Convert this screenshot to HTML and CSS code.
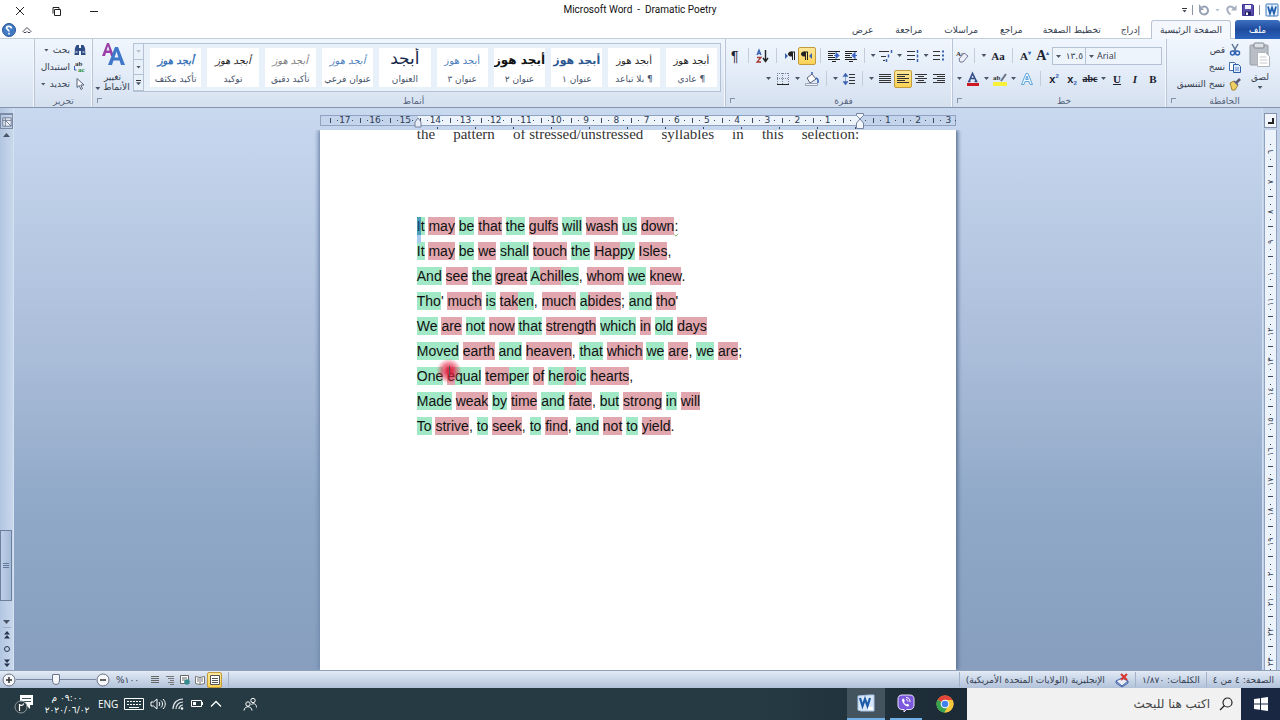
FILE: index.html
```html
<!DOCTYPE html>
<html lang="ar" dir="rtl">
<head>
<meta charset="utf-8">
<title>Dramatic Poetry - Microsoft Word</title>
<link rel="stylesheet" href="styles.css">
</head>
<body>
<header class="titlebar">
  <div class="quick">
    <svg class="i14" viewBox="0 0 14 14"><rect x="1" y="1" width="12" height="12" rx="1" fill="#e8f2fb" stroke="#3d78b8"/><path d="M3 3.500l2 7 2-6 2 6 2-7" fill="none" stroke="#1f5fae" stroke-width="1.800"/></svg>
    <span class="qsep"></span>
    <button aria-label="حفظ"><svg class="i12" viewBox="0 0 12 12"><path d="M.5.5h10l1 1v10H.5z" fill="#5b4cb0" stroke="#3c3390"/><path d="M3 1h6v4H3z" fill="#f2f2fb"/><path d="M3 7.500h6V11H3z" fill="#222459"/><path d="M4 8.500h2V11H4z" fill="#fff"/></svg></button>
    <button aria-label="تكرار"><svg class="i12" viewBox="0 0 12 12"><path d="M5.500 10.500C1.500 8 1.500 4 4 2.800 6 2 8 3 9 5" fill="none" stroke="#a6b0bf" stroke-width="2"/><path d="M6 6.500h5.500V1z" fill="#a6b0bf"/></svg></button>
    <span class="arr pale"></span>
    <button aria-label="تراجع"><svg class="i12" viewBox="0 0 12 12"><path d="M2.500 4.500C1 8 3 10.500 6 10.500s5-3 3.500-6C8.500 2.500 6.500 2 4 3" fill="none" stroke="#97a2b5" stroke-width="2"/><path d="M1 0v6h5z" fill="#97a2b5"/></svg></button>
    <span class="qsep"></span>
    <button class="more" aria-label="تخصيص"><span class="arr"></span></button>
  </div>
  <h1 dir="ltr">Microsoft Word&nbsp; -&nbsp; Dramatic Poetry</h1>
  <div class="winbtns">
    <button aria-label="تصغير"><svg class="i10" viewBox="0 0 10 10"><path d="M1 5.500h8" stroke="#222"/></svg></button>
    <button aria-label="استعادة"><svg class="i10" viewBox="0 0 10 10"><path d="M2.500 3.500h6v6h-6zM1 7.500V1.500h6V3" fill="none" stroke="#222"/></svg></button>
    <button aria-label="إغلاق"><svg class="i10" viewBox="0 0 10 10"><path d="M1 1l8 8M9 1L1 9" stroke="#222"/></svg></button>
  </div>
</header>
<nav class="tabs">
  <button class="file">ملف</button>
  <button class="on">الصفحة الرئيسية</button>
  <button>إدراج</button>
  <button>تخطيط الصفحة</button>
  <button>مراجع</button>
  <button>مراسلات</button>
  <button>مراجعة</button>
  <button>عرض</button>
  <span class="grow"></span>
  <button class="mini" aria-label="تصغير الشريط"><svg class="i10" viewBox="0 0 10 10"><path d="M1 6.500L5 2.500l4 4-1 1H6L5 6.500 4 7.500H2z" fill="#fff" stroke="#445"/></svg></button>
  <button class="mini" aria-label="تعليمات"><svg class="i14" viewBox="0 0 14 14"><circle cx="7" cy="7" r="6.500" fill="#4079c4" stroke="#2a5797"/><path d="M4.500 5.500C5 2.500 9.500 3 9.500 5c0 1.500-2.500 1.500-2.500 3.500M7 9.800v1.600" fill="none" stroke="#fff" stroke-width="1.600" transform="matrix(-1 0 0 1 14 0)"/></svg></button>
</nav>

<section class="ribbon">
  <div class="group clip">
    <div class="body">
      <button class="big">
        <svg class="paste" viewBox="0 0 22 26"><rect x="1" y="3" width="18" height="20" rx="1" fill="#b9bec6" stroke="#969ca6"/><rect x="5" y="1" width="10" height="5" rx="1" fill="#dde0e5" stroke="#7f858f"/><path d="M8.500 10.500h8l4 4v10h-12z" fill="#fff" stroke="#b0b5bd"/><path d="M10.500 15h7M10.500 18h8M10.500 21h8" stroke="#c5c9d0"/></svg>
        <span>لصق</span><span class="arr"></span>
      </button>
      <div class="list">
        <button><svg class="i12" viewBox="0 0 12 12"><path d="M3 0l4 7M9 0L5 7" stroke="#5c7396" stroke-width="1.500"/><circle cx="3.500" cy="9" r="2" fill="none" stroke="#2f62b4" stroke-width="1.500"/><circle cx="8.500" cy="9" r="2" fill="none" stroke="#2f62b4" stroke-width="1.500"/></svg>قص</button>
        <button><svg class="i12" viewBox="0 0 12 12"><path d="M.5 1.500h5l2 2v6h-7z" fill="#fff" stroke="#3d6fb4"/><path d="M4.500 3.500h5l2 2v6h-7z" fill="#dbe9fa" stroke="#2c5ea6"/><path d="M6 7h4M6 9h4" stroke="#5d8bc9"/></svg>نسخ</button>
        <button><svg class="i12" viewBox="0 0 12 12"><path d="M7 5l4-4" stroke="#5b5b78" stroke-width="2.500"/><path d="M1 5l4-2 4 4-3 5H3z" fill="#f0cf62" stroke="#a38432"/><path d="M5 3l4 4" stroke="#53618a" stroke-width="1.500"/></svg>نسخ التنسيق</button>
      </div>
    </div>
    <footer><span>الحافظة</span><i class="launch"></i></footer>
  </div>

  <div class="group font">
    <div class="body rows">
      <div class="row">
        <select class="face" aria-label="الخط"><option>Arial</option></select>
        <select class="size" aria-label="حجم الخط"><option>١٣.٥</option></select>
        <button class="t serif lg" dir="ltr">A<sup>▴</sup></button>
        <button class="t serif" dir="ltr">A<sup>▾</sup></button>
        <span class="sep"></span>
        <button class="t serif w20" dir="ltr">Aa</button><span class="arr"></span>
        <span class="sep"></span>
        <button class="t" aria-label="مسح التنسيق"><svg class="i14" viewBox="0 0 14 14"><text x="1" y="7" class="svgt">Aa</text><path d="M4 10l5-6 4 3-5 6H5z" fill="#eef0f7" stroke="#72789a"/></svg></button>
      </div>
      <div class="row">
        <button class="t serif">B</button>
        <button class="t serif it">I</button>
        <button class="t serif un">U</button><span class="arr"></span>
        <button class="t serif st">abc</button>
        <button class="t" dir="ltr">x<sub>2</sub></button>
        <button class="t" dir="ltr">x<sup>2</sup></button>
        <span class="sep"></span>
        <button class="t" aria-label="تأثيرات"><svg class="i14" viewBox="0 0 14 14"><path d="M1.500 12.500L6 1.500h2l4.500 11h-2.500l-1-3H5l-1 3zM5.700 7.500h2.600L7 4z" fill="#eef8ff" stroke="#5fa5dc"/></svg></button><span class="arr"></span>
        <button class="t" aria-label="تمييز"><svg class="i14" viewBox="0 0 14 14"><path d="M0 10h14v4H0z" fill="#f7f13a"/><text x="0" y="8" class="svgt">ab</text><path d="M8 9l5-7" stroke="#6c7282" stroke-width="2"/></svg></button><span class="arr"></span>
        <button class="t" aria-label="لون الخط"><svg class="i14" viewBox="0 0 14 14"><path d="M1 11h12v3H1z" fill="#d01820"/><path d="M3 9.500L6.500 1.500 10.500 9.500M4.500 6.500h4M2 9.500h2.500M8.500 9.500h3" fill="none" stroke="#344f86" stroke-width="1.600"/></svg></button><span class="arr"></span>
      </div>
    </div>
    <footer><span>خط</span><i class="launch"></i></footer>
  </div>

  <div class="group para">
    <div class="body rows">
      <div class="row">
        <button class="t" aria-label="تعداد نقطي"><svg class="i12" viewBox="0 0 12 12"><path d="M0 1.500h7M0 5.500h7M0 9.500h7" stroke="#333"/><path d="M9 1.500h2M9 5.500h2M9 9.500h2" stroke="#3a62b0" stroke-width="2"/></svg></button><span class="arr"></span>
        <button class="t" aria-label="تعداد رقمي"><svg class="i12" viewBox="0 0 12 12"><path d="M0 1.500h8M0 5.500h8M0 9.500h8" stroke="#333"/><path d="M10.500 0v3M10.500 4.500v3M10.500 9v3" stroke="#3a62b0" stroke-width="1.500"/></svg></button><span class="arr"></span>
        <button class="t" aria-label="قائمة متعددة"><svg class="i14" viewBox="0 0 14 14"><path d="M0 2.500h10M2 7.500h5M4 11.500h2" stroke="#333"/><path d="M12.500 1v3M9.500 5.500v3M7.500 10v3" stroke="#3a62b0" stroke-width="1.500"/></svg></button><span class="arr"></span>
        <span class="sep"></span>
        <button class="t" aria-label="إنقاص المسافة"><svg class="i12" viewBox="0 0 12 12"><path d="M0 1.500h12M0 3.500h7M0 5.500h5M0 7.500h7M0 9.500h12M4 11.500h4" stroke="#222"/><path d="M7 5.500l3-3v6zM10 5.500h2" fill="#3a62c0" stroke="#3a62c0"/></svg></button>
        <button class="t" aria-label="زيادة المسافة"><svg class="i12" viewBox="0 0 12 12"><path d="M0 1.500h12M0 3.500h7M0 5.500h5M0 7.500h7M0 9.500h12M4 11.500h4" stroke="#222"/><path d="M11 5.500l-3-3v6zM6 5.500h2" fill="#3a62c0" stroke="#3a62c0"/></svg></button>
        <span class="sep"></span>
        <button class="t sel" aria-label="من اليمين إلى اليسار"><svg class="i12" viewBox="0 0 12 12"><path d="M4 2H2.500a1.500 1.500 0 0 0 0 4H4zM4.500 2v8M6.500 2v8M3 2h4" fill="#222" stroke="#222"/><path d="M11 3v6L8 6z" fill="#3a62b0"/></svg></button>
        <button class="t" aria-label="من اليسار إلى اليمين"><svg class="i12" viewBox="0 0 12 12"><path d="M8 2H6.500a1.500 1.500 0 0 0 0 4H8zM8.500 2v8M10.500 2v8M7 2h4" fill="#222" stroke="#222"/><path d="M1 3v6l3-3z" fill="#3a62b0"/></svg></button>
        <span class="sep"></span>
        <button class="t w20" aria-label="فرز"><svg class="i14" viewBox="0 0 14 14"><path d="M2 6l2-5 2 5M2.500 4.500h3" fill="none" stroke="#3a62b0" stroke-width="1.300"/><path d="M2 8.500h4l-4 4.500h4" fill="none" stroke="#a33b33" stroke-width="1.300"/><path d="M10.500 1v10M8 9l2.500 3.500L13 9" fill="none" stroke="#222" stroke-width="1.400"/></svg></button>
        <span class="sep"></span>
        <button class="t pil">¶</button>
      </div>
      <div class="row">
        <button class="t" aria-label="محاذاة لليمين"><svg class="i12" viewBox="0 0 12 12"><path d="M0 1.500h12M4 3.500h8M0 5.500h12M4 7.500h8M0 9.500h12" stroke="#333"/></svg></button>
        <button class="t" aria-label="توسيط"><svg class="i12" viewBox="0 0 12 12"><path d="M0 1.500h12M3 3.500h6M0 5.500h12M3 7.500h6M1 9.500h10" stroke="#333"/></svg></button>
        <button class="t sel" aria-label="محاذاة لليسار"><svg class="i12" viewBox="0 0 12 12"><path d="M0 1.500h12M0 3.500h8M0 5.500h12M0 7.500h8M0 9.500h12" stroke="#333"/></svg></button>
        <button class="t" aria-label="ضبط"><svg class="i12" viewBox="0 0 12 12"><path d="M0 1.500h12M0 3.500h12M0 5.500h12M0 7.500h12M0 9.500h12" stroke="#333"/></svg></button><span class="arr"></span>
        <span class="sep"></span>
        <button class="t" aria-label="تباعد الأسطر"><svg class="i12" viewBox="0 0 12 12"><path d="M6 1.500h6M6 4.500h6M6 7.500h6M6 10.500h6" stroke="#333"/><path d="M2.500 0L5 3.500H0zM2.500 12L5 8.500H0zM2.500 3v6" fill="#3a62b0" stroke="#3a62b0" stroke-width=".500"/></svg></button><span class="arr"></span>
        <span class="sep"></span>
        <button class="t w20" aria-label="تظليل"><svg class="i14" viewBox="0 0 14 14"><path d="M2 6l5-4 4 5-6 4z" fill="#fff" stroke="#56617c"/><path d="M7 2V0M11 6c3 1 2 3 2 5" fill="none" stroke="#3a62b0" stroke-width="1.500"/><path d="M.5 11.500h12v2H.5z" fill="#eef2f8" stroke="#9aa6ba"/></svg></button><span class="arr"></span>
        <button class="t w20" aria-label="حدود"><svg class="i12" viewBox="0 0 12 12"><path d="M.5 0v11M5.500 0v11M11.500 0v11M0 .500h12M0 5.500h12" stroke="#7a8498" stroke-dasharray="1 1"/><path d="M0 11.500h12" stroke="#222"/></svg></button><span class="arr"></span>
      </div>
    </div>
    <footer><span>فقرة</span><i class="launch"></i></footer>
  </div>

  <div class="group styles">
    <div class="body">
      <div class="gallery">
        <button class="card"><b class="n">أبجد هوز</b><span>¶ عادي</span></button>
        <button class="card"><b class="n">أبجد هوز</b><span>¶ بلا تباعد</span></button>
        <button class="card"><b class="h1">أبجد هوز</b><span>عنوان ١</span></button>
        <button class="card"><b class="h2">أبجد هوز</b><span>عنوان ٢</span></button>
        <button class="card"><b class="h3">أبجد هوز</b><span>عنوان ٣</span></button>
        <button class="card"><b class="ti">أبجد</b><span>العنوان</span></button>
        <button class="card"><b class="su">أبجد هوز</b><span>عنوان فرعي</span></button>
        <button class="card"><b class="se">أبجد هوز</b><span>تأكيد دقيق</span></button>
        <button class="card"><b class="em">أبجد هوز</b><span>توكيد</span></button>
        <button class="card"><b class="ie">أبجد هوز</b><span>تأكيد مكثف</span></button>
        <div class="spin">
          <button aria-label="أعلى"><span class="arr pale"></span></button>
          <button aria-label="أسفل"><span class="arr"></span></button>
          <button class="more" aria-label="المزيد"><span class="arr"></span></button>
        </div>
      </div>
      <button class="big change">
        <svg class="aa" viewBox="0 0 24 24"><path d="M1 14L6 1h2l5 13h-3L9 11H5l-1 3zM5.500 8.500h3L7 4z" fill="#9b3fa8"/><path d="M7 23L14 5h3l7 18h-4l-1.500-4.500h-6L11 23zM13.500 15.500h4l-2-6z" fill="#3f78c8"/></svg>
        <span>تغيير<br>الأنماط <i class="arr"></i></span>
      </button>
    </div>
    <footer><span>أنماط</span><i class="launch"></i></footer>
  </div>

  <div class="group edit">
    <div class="body">
      <div class="list">
        <button><svg class="i12" viewBox="0 0 12 12"><path d="M1 4l1.500-3H5v10H.5zM7 1h2.500L11 4l.5 7H7zM5 4h2v3H5z" fill="#2f4d85"/><path d="M1.500 8h2M8.500 8h2" stroke="#fff"/></svg>بحث<i class="arr"></i></button>
        <button><svg class="i12" viewBox="0 0 12 12"><text x="1" y="5" class="svgt">ab</text><text x="4" y="11" class="svgt grn">ac</text><path d="M.5 5v4h2" fill="none" stroke="#345fae"/></svg>استبدال</button>
        <button><svg class="i12" viewBox="0 0 12 12"><path d="M3 .500v9l2.300-2 1.700 4 1.500-.8-1.700-3.700H10z" fill="#fff" stroke="#56617c"/></svg>تحديد<i class="arr"></i></button>
      </div>
    </div>
    <footer><span>تحرير</span></footer>
  </div>
</section>

<main class="work" dir="ltr">
  <aside class="scroll">
    <button class="toggle" aria-label="المسطرة"><svg class="i10" viewBox="0 0 12 12"><path d="M1 1h10v10H1zM1 4h10M4 1v10M4 4l7 7" fill="#eef3fa" stroke="#5d6b85"/></svg></button>
    <span class="arr up"></span>
    <div class="track"><div class="thumb"></div></div>
    <span class="arr"></span>
    <div class="browse">
      <svg class="i8" viewBox="0 0 8 8"><path d="M4 0l3 3.500H1zM4 4l3 3.500H1z" fill="#26344f"/></svg>
      <svg class="i8" viewBox="0 0 8 8"><circle cx="4" cy="4" r="2.500" fill="none" stroke="#26344f"/></svg>
      <svg class="i8" viewBox="0 0 8 8"><path d="M4 4L1 .500h6zM4 8L1 4.500h6z" fill="#26344f"/></svg>
    </div>
  </aside>
  <div class="canvas">
    <div class="hruler">
      <svg class="mark start" viewBox="0 0 8 16"><path d="M4 5l3 4v5H1V9z" fill="#e6edf7" stroke="#75859f"/></svg>
      <svg class="mark end" viewBox="0 0 8 16"><path d="M.5.500h7v2L4 6 .500 2.500zM4 6l3.500 4v5.500h-7V10z" fill="#f2f5fa" stroke="#75859f"/></svg>
      <span>17</span><span>16</span><span>15</span><span>14</span><span>13</span><span>12</span><span>11</span><span>10</span><span>9</span><span>8</span><span>7</span><span>6</span><span>5</span><span>4</span><span>3</span><span>2</span><span>1</span><span></span><span>1</span><span>2</span><span>3</span>
    </div>
    <article class="page">
      <p class="intro"><span>the</span><span>pattern</span><span>of stressed/unstressed</span><span>syllables</span><span>in</span><span>this</span><span>selection:</span></p>
      <div class="poem">
        <p><mark class="g"><span class="caret">I</span>t</mark> <mark>may</mark> <mark class="g">be</mark> <mark>that</mark> <mark class="g">the</mark> <mark>gulfs</mark> <mark class="g">will</mark> <mark>wash</mark> <mark class="g">us</mark> <mark>down</mark><mark class="wavy">:</mark></p>
        <p><mark class="g">It</mark> <mark>may</mark> <mark class="g">be</mark> <mark>we</mark> <mark class="g">shall</mark> <mark>touch</mark> <mark class="g">the</mark> <mark>Hap</mark><mark class="g">py</mark> <mark>Isles</mark>,</p>
        <p><mark class="g">And</mark> <mark>see</mark> <mark class="g">the</mark> <mark>great</mark> <mark class="g">A</mark><mark>chil</mark><mark class="g">les</mark>, <mark>whom</mark> <mark class="g">we</mark> <mark>knew</mark>.</p>
        <p><mark class="g">Tho</mark>' <mark>much</mark> <mark class="g">is</mark> <mark>tak</mark><mark class="g">en</mark>, <mark>much</mark> <mark class="g">a</mark><mark>bides</mark>; <mark class="g">and</mark> <mark>tho</mark>'</p>
        <p><mark class="g">We</mark> <mark>are</mark> <mark class="g">not</mark> <mark>now</mark> <mark class="g">that</mark> <mark>strength</mark> <mark class="g">which</mark> <mark>in</mark> <mark class="g">old</mark> <mark>days</mark></p>
        <p><mark class="g">Moved</mark> <mark>earth</mark> <mark class="g">and</mark> <mark>heaven</mark>, <mark class="g">that</mark> <mark>which</mark> <mark class="g">we</mark> <mark>are</mark>, <mark class="g">we</mark> <mark>are</mark>;</p>
        <p><mark class="g">One</mark> <mark class="spot">e</mark><mark class="g">qual</mark> <mark>tem</mark><mark class="g">per</mark> <mark>of</mark> <mark class="g">he</mark><mark>ro</mark><mark class="g">ic</mark> <mark>hearts</mark>,</p>
        <p><mark class="g">Made</mark> <mark>weak</mark> <mark class="g">by</mark> <mark>time</mark> <mark class="g">and</mark> <mark>fate</mark>, <mark class="g">but</mark> <mark>strong</mark> <mark class="g">in</mark> <mark>will</mark></p>
        <p><mark class="g">To</mark> <mark>strive</mark>, <mark class="g">to</mark> <mark>seek</mark>, <mark class="g">to</mark> <mark>find</mark>, <mark class="g">and</mark> <mark>not</mark> <mark class="g">to</mark> <mark>yield</mark>.</p>
      </div>
    </article>
  </div>
  <aside class="vside">
    <div class="tabstop"><svg class="i8" viewBox="0 0 8 8"><path d="M6 1v5H1" fill="none" stroke="#222" stroke-width="2"/></svg></div>
    <div class="vruler"><span>٦</span><span>٧</span><span>٨</span><span>٩</span><span>١٠</span><span>١١</span><span>١٢</span><span>١٣</span><span>١٤</span><span>١٥</span><span>١٦</span><span>١٧</span><span>١٨</span><span>١٩</span><span>٢٠</span><span>٢١</span><span>٢٢</span><span>٢٣</span></div>
  </aside>
</main>

<footer class="status">
  <span>الصفحة: ٤ من ٤</span><span class="sep"></span>
  <span>الكلمات: <bdo dir="ltr">١/٨٧٠</bdo></span><span class="sep"></span>
  <svg class="i14" viewBox="0 0 14 14"><path d="M1 8l6-3 6 3-6 5z" fill="#e9eefa" stroke="#3d5fa6"/><path d="M1 8v2l6 4 6-4V8" fill="none" stroke="#3d5fa6"/><path d="M6 1l6 6M12 1L6 7" stroke="#d8352c" stroke-width="2"/></svg>
  <span class="lang">الإنجليزية (الولايات المتحدة الأمريكية)</span><span class="sep"></span>
  <span class="grow"></span>
  <span class="sep"></span>
  <div class="views">
    <button class="sel" aria-label="تخطيط الطباعة"><svg class="i10" viewBox="0 0 10 10"><path d="M.5.500h9v9h-9zM2 3.500h6M2 5.500h6M2 7.500h6" fill="#fff" stroke="#555"/></svg></button>
    <button aria-label="قراءة"><svg class="i10" viewBox="0 0 10 10"><path d="M.5 1.500L5 2.500l4.500-1v7L5 9.500.500 8.500zM5 2v7M2 4h2M6 4h2M2 6h2M6 6h2" fill="#fff" stroke="#777"/></svg></button>
    <button aria-label="ويب"><svg class="i10" viewBox="0 0 10 10"><path d="M.5.500h8v8h-8zM2 3h5M2 5h3" fill="#fff" stroke="#666"/><circle cx="7" cy="7" r="2.800" fill="#358a8c"/></svg></button>
    <button aria-label="مخطط تفصيلي"><svg class="i10" viewBox="0 0 10 10"><path d="M1 1.500h8M3 3.500h6M5 5.500h4M3 7.500h6M5 9.500h4" stroke="#777"/></svg></button>
    <button aria-label="مسودة"><svg class="i10" viewBox="0 0 10 10"><path d="M1 1.500h8M1 3.500h8M1 5.500h8M1 7.500h8" stroke="#666"/></svg></button>
  </div>
  <span class="zoomv" dir="ltr"><bdo dir="ltr">%١٠٠</bdo></span>
  <button class="rnd" aria-label="تصغير العرض"><svg class="i14" viewBox="0 0 14 14"><circle cx="7" cy="7" r="6" fill="#f5f7fb" stroke="#6b7280"/><path d="M4 7h6" stroke="#333" stroke-width="1.500"/></svg></button>
  <input class="zoom" type="range" min="0" max="100" value="50" aria-label="التكبير">
  <button class="rnd" aria-label="تكبير العرض"><svg class="i14" viewBox="0 0 14 14"><circle cx="7" cy="7" r="6" fill="#f5f7fb" stroke="#6b7280"/><path d="M4 7h6M7 4v6" stroke="#333" stroke-width="1.500"/></svg></button>
</footer>

<footer class="taskbar">
  <button class="startb" aria-label="ابدأ"><svg class="i14" viewBox="0 0 14 14"><path d="M0 2l6-.8v5.300H0zM7 1l7-1v6.500H7zM0 7.500h6v5.300L0 12zM7 7.500h7V14l-7-1z" fill="#fff"/></svg></button>
  <label class="search"><svg class="i14" viewBox="0 0 14 14"><circle cx="8.500" cy="5.500" r="4.500" fill="none" stroke="#222" stroke-width="1.200"/><path d="M5.500 8.500L1 13" stroke="#222" stroke-width="1.200"/></svg><input type="text" placeholder="اكتب هنا للبحث" aria-label="بحث"></label>
  <button class="app" aria-label="Chrome"><svg class="i18" viewBox="0 0 18 18"><circle cx="9" cy="9" r="8.500" fill="#f7c83b"/><path d="M9 9L1.600 4.700A8.500 8.500 0 0 1 16.400 4.700z" fill="#e2453a"/><path d="M9 9L1.600 4.700A8.500 8.500 0 0 0 8.500 17.500L12 11z" fill="#35a352"/><path d="M9 5h7.500a8.500 8.500 0 0 1-8 12.500L12.500 11z" fill="#f7c83b"/><circle cx="9" cy="9" r="4.300" fill="#fff"/><circle cx="9" cy="9" r="3.300" fill="#4280ec"/></svg></button>
  <button class="app run" aria-label="Viber"><svg class="i18" viewBox="0 0 18 18"><path d="M5 1h8c3 0 4 2 4 4v6c0 3-2 4.500-4 4.500H9.500L7 18v-2.500H5c-3 0-4-2-4-4.500V5c0-2 1-4 4-4z" fill="#7c59dc" stroke="#e8e2fb"/><path d="M6 4.500c-2 1-.5 4 1 5.800 1.500 1.700 4 3.200 5 1.500.5-1-.7-1.500-1.700-2l-1 .7C8 10 7.500 9 7 8l.8-1C7.500 6 7 4.500 6 4.500z" fill="#fff"/><path d="M9 3.500c3 0 4 2 4 4.500M9 5.500c1.500 0 2 1 2 2" fill="none" stroke="#fff"/></svg></button>
  <button class="app run active" aria-label="Word"><svg class="i18" viewBox="0 0 18 18"><path d="M1 2l11-1h5v16H4l-3-1z" fill="#d9e8f8" stroke="#a9c6e6"/><path d="M3 4l2.500 8L8 5l2.500 7L13 4" fill="none" stroke="#1d5aa8" stroke-width="2.200"/><path d="M11 13h5v3h-5z" fill="#fff"/></svg></button>
  <span class="grow"></span>
  <div class="tray">
    <svg class="i14 people" viewBox="0 0 14 14"><circle cx="5" cy="7" r="2.200" fill="none" stroke="#fff"/><circle cx="10" cy="3.500" r="2.200" fill="none" stroke="#fff"/><path d="M1 13.500c.5-5 7.500-5 8 0M8.500 7.500c3-2 5 0 5 3" fill="none" stroke="#fff"/></svg>
    <svg class="i12" viewBox="0 0 12 12"><path d="M1 8.500l5-5 5 5" fill="none" stroke="#fff" stroke-width="1.300"/></svg>
    <svg class="i14" viewBox="0 0 14 14"><path d="M1.500 3.500h10v6h-10zM12.500 5v3" fill="none" stroke="#fff"/><path d="M3 5h3v3H3z" fill="#fff"/></svg>
    <svg class="i12" viewBox="0 0 12 12"><path d="M1 11C1 5 5 1 11 1M4 11c0-4 3-7 7-7M7 11c0-2 2-4 4-4" fill="none" stroke="#dfe5e8" stroke-width="1.200"/><circle cx="10" cy="10.500" r="1.300" fill="#fff"/></svg>
    <svg class="i16" viewBox="0 0 16 14"><path d="M1 5h2.500L7 2v10L3.500 9H1zM9 5c1 1 1 3 0 4M11 3.500c2 2 2 5 0 7M13 2c3 3 3 7 0 10" fill="none" stroke="#fff"/></svg>
    <svg class="i20" viewBox="0 0 20 14"><path d="M.5 1.500h19v11H.5z" fill="none" stroke="#fff"/><path d="M3 4.500h14M3 7.500h14" stroke="#fff" stroke-dasharray="2 1"/><path d="M5 10.500h10" stroke="#fff"/></svg>
    <span class="eng">ENG</span>
    <div class="clock"><span>٠٩:٠٠ م</span><span><bdo dir="ltr">٢٠٢٠/٠٦/٠٢</bdo></span></div>
    <svg class="note" viewBox="0 0 20 20"><path d="M6 1h13v10h-3v4l-4-4H6z" fill="#fff"/><path d="M8 4.500h9M8 7.500h9" stroke="#44545c"/><circle cx="7" cy="13" r="6" fill="#29383f" stroke="#8d989d"/><path d="M5.500 17V10M5.500 10c0 2 4 2 4-.5" fill="none" stroke="#fff" stroke-width="1.200"/></svg>
  </div>
</footer>
</body>
</html>
```

FILE: styles.css
```css
* { box-sizing: border-box; }
html, body { height: 100%; }
body {
  margin: 0;
  display: flex;
  flex-direction: column;
  overflow: hidden;
  background: #fff;
  color: #333c4e;
  font: 9px/12px "DejaVu Sans", "Liberation Sans", sans-serif;
}
button, select, input { font: inherit; color: inherit; }
button { border: 0; padding: 0; margin: 0; background: none; display: inline-flex; align-items: center; justify-content: center; white-space: nowrap; }
svg { display: block; flex: none; overflow: visible; }
p, h1 { margin: 0; }
.grow { flex: 1; }
.i8 { width: 8px; height: 8px; }
.i10 { width: 10px; height: 10px; }
.i12 { width: 12px; height: 12px; }
.i14 { width: 14px; height: 14px; }
.i16 { width: 16px; height: 14px; }
.i18 { width: 18px; height: 18px; }
.i20 { width: 20px; height: 14px; }
.svgt { font: bold 7px "Liberation Serif", serif; fill: #333; direction: ltr; }
.grn { fill: #2b8b3c; }
.arr { display: inline-block; flex: none; width: 5px; height: 3px; background: #4a5568; clip-path: polygon(0 0, 100% 0, 50% 100%); }
.arr.pale { background: #b4bfce; }
.arr.up { clip-path: polygon(50% 0, 100% 100%, 0 100%); }

/* title bar */
.titlebar { display: grid; grid-template-columns: 1fr auto 1fr; align-items: center; height: 20px; flex: none; }
.titlebar h1 { font: 10px/20px Roboto, sans-serif; color: #111; }
.quick { display: flex; align-items: center; gap: 5px; height: 18px; }
.quick > svg:first-child { margin-right: 1px; }
.qsep { width: 1px; height: 10px; background: #8a93a3; }
.more { flex-direction: column; gap: 1px; }
.more::before { content: ""; width: 5px; height: 1px; background: #333; }
.winbtns { display: flex; justify-content: flex-end; gap: 27px; padding-left: 15px; padding-top: 2px; }

/* tabs */
.tabs { display: flex; height: 19px; flex: none; border-bottom: 1px solid #c3ccd9; }
.tabs button { padding: 0 11px; height: 19px; }
.tabs .file { width: 45px; margin-left: 4px; color: #fff; background: linear-gradient(#3d6fc0, #1f4b9d 50%, #2a63bd); border-radius: 3px 3px 0 0; }
.tabs .on { border: 1px solid #b9c4d4; border-bottom: 0; background: #f4f8fd; border-radius: 3px 3px 0 0; padding: 0 8px; }
.tabs .on + button + button { padding: 0 9px; }
.tabs .mini { padding: 0; margin-left: 2px; width: 16px; }
.tabs .mini:last-child { margin-left: 1px; }

/* ribbon */
.ribbon { display: flex; height: 69px; flex: none; background: linear-gradient(#f0f6fd, #e3ecf8 50%, #d5e0ef); border-bottom: 1px solid #8595ad; }
.group { display: flex; flex-direction: column; border-left: 1px solid #b9c5d6; box-shadow: -1px 0 #f5f9fe; padding-top: 3px; }
.group .body { flex: 1; display: flex; min-height: 0; }
.group footer { display: flex; align-items: center; height: 13px; color: #55637b; }
.group footer span { flex: 1; text-align: center; }
.launch { width: 5px; height: 5px; margin-left: 4px; border: 1px solid #8390a5; border-right-width: 0; border-bottom-width: 0; }
.clip { width: 114px; padding-right: 7px; }
.font { width: 214px; }
.para { width: 227px; }
.styles { flex: 1; }
.edit { width: 58px; margin-left: 34px; }
.big { flex-direction: column; justify-content: flex-start; gap: 3px; width: 26px; }
.paste { width: 22px; height: 26px; }
.list { display: flex; flex-direction: column; gap: 5px; padding: 2px 6px 0 0; align-items: flex-start; }
.list button { gap: 4px; height: 12px; }
.rows { flex-direction: column; gap: 4px; padding: 4px 4px 0 0; }
.row { display: flex; align-items: center; height: 19px; }
.row select { appearance: none; height: 18px; border: 1px solid #b5c2d4; border-radius: 0; margin: 0; padding: 0 2px 0 11px; background: #eef4fb url("data:image/svg+xml,%3Csvg xmlns='http://www.w3.org/2000/svg' width='5' height='3'%3E%3Cpath d='M0 0h5L2.500 3z' fill='%234a5568'/%3E%3C/svg%3E") 3px 7px no-repeat; }
.row .face { width: 79px; direction: ltr; font-family: "Open Sans", sans-serif; }
.row .size { width: 34px; border-right: 0; }
.t { width: 18px; height: 18px; font: bold 11px/18px "Liberation Sans", sans-serif; color: #1d2230; }
.t sup, .t sub { font-size: 6px; line-height: 6px; color: #3a62b0; }
.t sup { align-self: flex-start; padding-top: 3px; }
.t sub { align-self: flex-end; padding-bottom: 2px; }
.serif { font-family: "Liberation Serif", serif; }
.lg { font-size: 14px; }
.w20 { width: 20px; }
.it { font-style: italic; }
.un { text-decoration: underline; }
.st { font-size: 10px; text-decoration: line-through; }
.pil { font-size: 14px; font-weight: normal; }
.sel { background: linear-gradient(#fde79a, #fbd254); border: 1px solid #c29b3c; border-radius: 2px; }
.row .sep { width: 1px; height: 15px; background: #c2ccda; margin: 0 4px; }
.row .arr { margin: 0 2px; }

/* styles gallery */
.gallery { flex: 1; display: flex; gap: 6px; height: 49px; padding: 0 3px 0 0; margin: 1px 4px 0 5px; border: 1px solid #b5c2d4; background: #e8f0fa; }
.card { flex: 1 1 0; min-width: 0; height: 39px; margin-top: 4px; background: #fff; flex-direction: column; overflow: hidden; }
.card b { height: 23px; font: 10px/23px "DejaVu Sans", sans-serif; color: #222; }
.card span { color: #47536a; line-height: 14px; }
.card .h1 { font-size: 11px; font-weight: bold; color: #2b568f; }
.card .h2 { font-size: 12px; font-weight: bold; color: #111; }
.card .h3, .card .su { color: #4f81bd; }
.card .ti { font-size: 17px; color: #17284a; line-height: 18px; }
.card .su, .card .se, .card .em, .card .ie { font-style: italic; }
.card .se { color: #808080; }
.card .ie { color: #3c74b8; font-weight: bold; }
.spin { display: flex; flex-direction: column; width: 10px; }
.spin button { flex: 1; border-right: 1px solid #b5c2d4; border-bottom: 1px solid #b5c2d4; }
.change { width: 31px; margin-left: 4px; line-height: 10px; gap: 6px; }
.aa { width: 24px; height: 24px; }

/* work area */
.work { flex: 1; display: flex; min-height: 0; background: linear-gradient(#c8d8ef, #a9bcd8 45%, #90a9c8 70%, #879ebe); }
.scroll { width: 14px; display: flex; flex-direction: column; align-items: center; background: linear-gradient(90deg, #b3c6e1, #c8d8ec); border-right: 1px solid #d6e2f1; padding-top: 5px; }
.scroll .arr { width: 7px; height: 4px; margin: 3px 0; }
.toggle { width: 13px; height: 16px; border: 1px solid #7b8ba5; border-top-width: 2px; margin-bottom: 1px; }
.track { flex: 1; align-self: stretch; display: grid; grid-template-rows: 389fr 71fr 16fr; }
.thumb { grid-row: 2; border: 1px solid #6d7f9d; background: linear-gradient(#64789a, #64789a) 50% 50% / 6px 1px no-repeat, linear-gradient(#64789a, #64789a) 50% calc(50% - 2px) / 6px 1px no-repeat, linear-gradient(#64789a, #64789a) 50% calc(50% + 2px) / 6px 1px no-repeat, linear-gradient(90deg, #bed0e8, #a5bad8); margin-right: 1px; }
.browse { display: flex; flex-direction: column; gap: 6px; padding: 3px 0; border-top: 1px solid #9fb1cc; }
.canvas { flex: 1; display: flex; flex-direction: column; align-items: center; overflow: hidden; }
.hruler { position: relative; display: flex; width: 51%; height: 11px; margin: 7px 0 4px; padding-left: 9px; border: 1px solid #8fa3c0; background: linear-gradient(90deg, #c4d4ea 0 97px, #edf3fb 97px 539px, #c4d4ea 539px); font: 9px/9px "DejaVu Sans", sans-serif; color: #2c3b55; flex: none; }
.hruler::after { content: ""; position: absolute; left: 116px; top: 11px; width: 424px; height: 2px; background: repeating-linear-gradient(90deg, #3d4a62 0 1px, transparent 1px 38px); }
.hruler > span { flex: 1; text-align: center; background: linear-gradient(#3d4a62, #3d4a62) 7px 50% / 1px 1px no-repeat, linear-gradient(#3d4a62, #3d4a62) calc(100% - 7px) 50% / 1px 1px no-repeat, linear-gradient(#3d4a62, #3d4a62) 0 50% / 1px 5px no-repeat; }
.hruler > span:last-child { margin-right: -8px; }
.mark { position: absolute; top: -3px; width: 8px; height: 16px; }
.mark.start { left: 93px; }
.mark.end { left: 535px; }
.page { width: 51%; flex: 1; background: #fff; padding: 0 97px 0 97px; overflow: hidden; color: #111; box-shadow: 2px 0 4px #5d7396, -2px 0 4px #7990b2; clip-path: inset(0 -6px 0 -6px); }
.intro { display: flex; justify-content: space-between; font: 15px/18px "Liberation Serif", serif; margin-top: -5px; white-space: nowrap; color: #333; }
.poem { margin-top: 71px; font: 14px/25px "Liberation Sans", sans-serif; white-space: nowrap; }
mark { background: #e2a6ae; color: inherit; padding: 1px 0; }
mark.g { background: #a0e8c6; }
mark.wavy { background: none; text-decoration: underline wavy #6aa860 1px; }
.caret { position: relative; padding: 1px 0; background: #4b9fb8; color: #17406a; }
.caret::after { content: ""; position: absolute; left: 0; top: 100%; width: 4px; height: 8px; background: #a9cdee; }
.spot { position: relative; }
.spot::after { content: ""; position: absolute; left: -11px; top: -9px; width: 26px; height: 26px; border-radius: 50%; background: linear-gradient(#555, #555) 50% 50% / 1px 10px no-repeat, radial-gradient(circle, rgba(215, 20, 50, .85) 0 12%, rgba(226, 40, 70, .55) 40%, transparent 68%); }
.vside { width: 18px; display: flex; flex-direction: column; border-left: 1px solid #d2dff0; background: #c1d1e8; }
.tabstop { display: flex; align-items: center; justify-content: center; height: 15px; margin: 5px 3px 2px 1px; border: 1px solid #8494ae; background: #f0f5fc; }
.vruler { flex: 1; display: flex; flex-direction: column; margin: 0 3px 0 1px; background: #edf3fb; border: 1px solid #8fa3c0; border-width: 0 1px; padding-top: 7px; overflow: hidden; font-size: 8px; line-height: 11px; }
.vruler span { flex: 0 0 30px; writing-mode: vertical-rl; transform: rotate(180deg); text-align: center; background: linear-gradient(#3d4a62, #3d4a62) 50% 0 / 5px 1px no-repeat, linear-gradient(#3d4a62, #3d4a62) 50% 7px / 1px 1px no-repeat, linear-gradient(#3d4a62, #3d4a62) 50% 22px / 1px 1px no-repeat; }

/* status bar */
.status { display: flex; align-items: center; height: 18px; flex: none; padding: 0 6px 0 2px; background: linear-gradient(#e2eaf5, #c9d6e8 50%, #b2c2d9); border-top: 1px solid #8fa0b9; }
.status .sep { width: 1px; height: 15px; background: #a3b2c9; margin: 0 6px; }
.lang { margin-right: 10px; }
.views { display: flex; }
.views button { width: 15px; height: 16px; }
.zoomv { margin: 0 8px 0 6px; }
.zoom { appearance: none; width: 80px; height: 14px; margin: 0; background: linear-gradient(#7987a0, #7987a0) 50% / 100% 1px no-repeat; }
.zoom::-webkit-slider-thumb { appearance: none; width: 8px; height: 11px; background: #f4f6fa; border: 1px solid #68758c; border-radius: 1px 1px 4px 4px; }

/* taskbar */
.taskbar { display: flex; height: 32px; flex: none; align-items: stretch; color: #fff; background: linear-gradient(90deg, #253a42 60%, #1c2a36 75%); }
.startb { width: 39px; background: #1a2742; }
.search { width: 274px; background: #f1f1f1; display: flex; align-items: center; gap: 9px; padding-right: 8px; }
.search input { flex: 1; min-width: 0; border: 0; background: none; padding: 0; font-size: 12px; }
.search input::placeholder { color: #444; opacity: 1; }
.app { width: 32px; margin-left: 5px; }
.app:nth-of-type(2) { margin-right: 6px; margin-left: 7px; }
.run { border-bottom: 2px solid #6fb1e6; }
.active { width: 38px; background: #44545f; margin: 0; }
.tray { display: flex; align-items: center; gap: 6px; padding-left: 14px; }
.people { margin-left: 15px; }
.eng { font: 10px/12px "Open Sans", sans-serif; }
.clock { display: flex; flex-direction: column; align-items: center; width: 42px; margin: 0 4px 0 6px; white-space: nowrap; }
.note { width: 20px; height: 20px; }
```
